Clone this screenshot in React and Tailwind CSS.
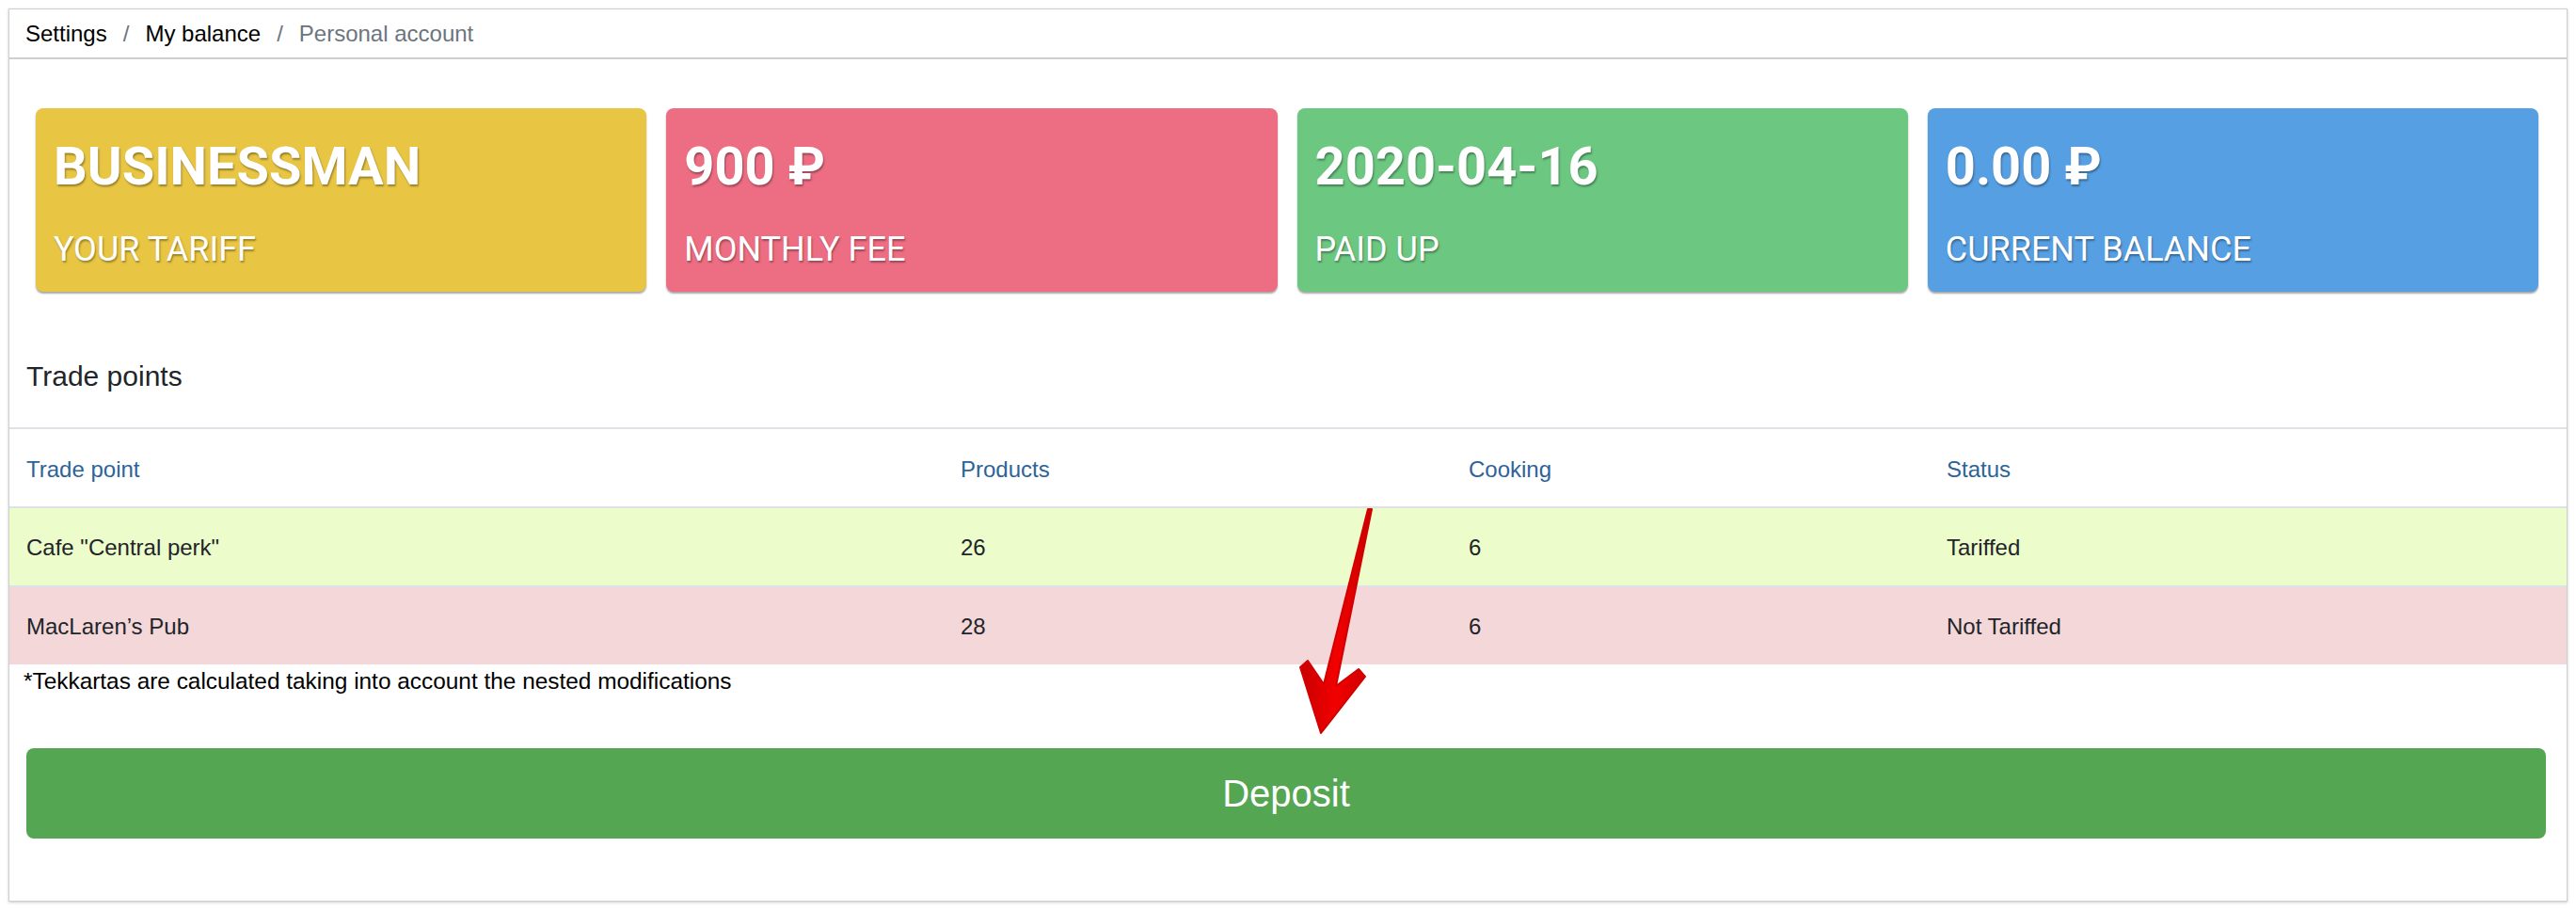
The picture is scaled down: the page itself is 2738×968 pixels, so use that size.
import React from 'react';

const cards = [
  { value: 'BUSINESSMAN', label: 'YOUR TARIFF', color: 'bg-[#e8c543]' },
  { value: '900 ₽', label: 'MONTHLY FEE', color: 'bg-[#ed6d83]' },
  { value: '2020-04-16', label: 'PAID UP', color: 'bg-[#6cc781]' },
  { value: '0.00 ₽', label: 'CURRENT BALANCE', color: 'bg-[#569fe3]' },
];

const points = [
  { name: 'Cafe "Central perk"', products: 26, cooking: 6, status: 'Tariffed', bg: 'bg-[#ecfccb]' },
  { name: 'MacLaren’s Pub', products: 28, cooking: 6, status: 'Not Tariffed', bg: 'bg-[#f3d7d9]' },
];

function Arrow() {
  return (
    <svg
      className="absolute top-0 left-0 pointer-events-none"
      width="2738"
      height="968"
      viewBox="0 0 2738 968"
    >
      <defs>
        <linearGradient id="arrowRed" x1="0" y1="0" x2="1" y2="0">
          <stop offset="0" stopColor="#c80000" />
          <stop offset="0.5" stopColor="#f20000" />
          <stop offset="1" stopColor="#c80000" />
        </linearGradient>
      </defs>
      <path
        d="M1454 541 L1458 541 L1420 729 L1444 711 L1451 719 L1404 779 L1382 709 L1390 702 L1407 727 Z"
        fill="url(#arrowRed)"
        stroke="#d40000"
        strokeWidth="2"
        strokeLinejoin="round"
      />
    </svg>
  );
}

export default function App() {
  return (
    <div className="relative w-[2738px] h-[968px] bg-white font-['Liberation_Sans',Arial,sans-serif] text-[#212529]">
      <div className="absolute top-[9px] left-[9px] w-[2720px] h-[949px] border border-[#cfcfcf] shadow-[0_1px_3px_rgba(0,0,0,0.2)] bg-white flex flex-col">
        {/* breadcrumb */}
        <div className="h-[53px] pt-[8px] pl-[17px] flex items-start border-b-2 border-[#cfcfcf] text-[24px] leading-[36px]">
          <span className="text-black">Settings</span>
          <span className="px-[17px] text-[#6c757d]">/</span>
          <span className="text-black">My balance</span>
          <span className="px-[17px] text-[#6c757d]">/</span>
          <span className="text-[#6c757d]">Personal account</span>
        </div>

        {/* cards */}
        <div className="mt-[52px] pl-[28px] pr-[30px] grid grid-cols-4 gap-[21px]">
          {cards.map((c) => (
            <div
              key={c.label}
              className={`${c.color} h-[195px] rounded-[8px] pt-[29px] px-[19px] shadow-[0_2px_2px_rgba(0,0,0,0.35)] font-['Roboto',sans-serif] text-white [text-shadow:1px_2px_2px_rgba(0,0,0,0.35)]`}
            >
              <div className="text-[56px] leading-[66px] font-bold">{c.value}</div>
              <div className="mt-[34px] text-[36px] leading-[42px] font-normal">{c.label}</div>
            </div>
          ))}
        </div>

        {/* trade points */}
        <div className="mt-[72px] pl-[18px] text-[30px] leading-[36px] font-medium text-[#212529]">Trade points</div>

        <div className="mt-[36px] border-t-2 border-[#dee2e6] text-[24px] leading-[30px]">
          <div className="grid grid-cols-[993px_540px_508px_1fr] h-[82px] pt-[3px] items-center text-[#2d6398]">
            <div className="pl-[18px]">Trade point</div>
            <div className="pl-[18px]">Products</div>
            <div className="pl-[18px]">Cooking</div>
            <div className="pl-[18px]">Status</div>
          </div>
          {points.map((p) => (
            <div
              key={p.name}
              className={`${p.bg} grid grid-cols-[993px_540px_508px_1fr] h-[84px] pt-[2px] items-center border-t-2 border-[#dee2e6]`}
            >
              <div className="pl-[18px]">{p.name}</div>
              <div className="pl-[18px]">{p.products}</div>
              <div className="pl-[18px]">{p.cooking}</div>
              <div className="pl-[18px]">{p.status}</div>
            </div>
          ))}
        </div>

        <p className="mt-[4px] pl-[15px] text-[24.4px] leading-[28px] text-black">
          *Tekkartas are calculated taking into account the nested modifications
        </p>

        <div className="mt-[57px] ml-[18px] mr-[22px]">
          <button className="w-full h-[96px] rounded-[8px] bg-[#55a653] text-white text-[40px] leading-[48px]">
            Deposit
          </button>
        </div>
      </div>
      <Arrow />
    </div>
  );
}
